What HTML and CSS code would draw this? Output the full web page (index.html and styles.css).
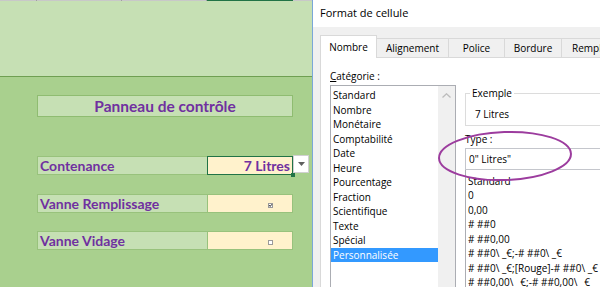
FILE: index.html
```html
<!DOCTYPE html>
<html lang="fr">
<head>
  <meta charset="UTF-8">
  <title>Format de cellule</title>
  <link rel="stylesheet" href="styles.css">
</head>
<body>
  <div class="sheet">
    <div class="colheads">
      <span class="ch ch-a"></span>
      <span class="ch ch-b"></span>
      <span class="ch ch-c"></span>
      <span class="ch ch-d"></span>
      <span class="ch ch-e"></span>
    </div>
    <div class="row1"></div>
    <div class="board">
      <div class="title-cell">Panneau de contrôle</div>
      <div class="fields">
        <div class="field">
          <div class="lbl">Contenance</div>
          <div class="val sel">7 Litres</div>
          <div class="dd">
            <svg width="7" height="4" viewBox="0 0 7 4"><polygon points="0,0 7,0 3.5,4" fill="#5f5f5f"/></svg>
          </div>
        </div>
        <div class="field">
          <div class="lbl">Vanne Remplissage</div>
          <div class="val">
            <svg class="check" width="5" height="5" viewBox="0 0 5 5">
              <rect x="0.5" y="0.5" width="4" height="4" fill="#fff" stroke="#9a9a9a"/>
              <path d="M1.2 2.2 L2.2 3.4 L3.8 1.3" fill="none" stroke="#222" stroke-width="1"/>
            </svg>
          </div>
        </div>
        <div class="field">
          <div class="lbl">Vanne Vidage</div>
          <div class="val">
            <svg class="check" width="5" height="5" viewBox="0 0 5 5">
              <rect x="0.5" y="0.5" width="4" height="4" fill="#fff" stroke="#9a9a9a"/>
            </svg>
          </div>
        </div>
      </div>
    </div>
  </div>

  <div class="dialog">
    <div class="titlebar">Format de cellule</div>
    <div class="dbody">
      <div class="tabs">
        <div class="tab on t-nombre">Nombre</div>
        <div class="tab t-align">Alignement</div>
        <div class="tab t-police">Police</div>
        <div class="tab t-bordure">Bordure</div>
        <div class="tab t-rempl">Remplissage</div>
      </div>
      <div class="panel">
        <div class="cat-col">
          <div class="cat-label"><u>C</u>atégorie :</div>
          <div class="catlist">
            <ul class="items">
              <li>Standard</li>
              <li>Nombre</li>
              <li>Monétaire</li>
              <li>Comptabilité</li>
              <li>Date</li>
              <li>Heure</li>
              <li>Pourcentage</li>
              <li>Fraction</li>
              <li>Scientifique</li>
              <li>Texte</li>
              <li>Spécial</li>
              <li class="picked">Personnalisée</li>
            </ul>
            <div class="vscroll">
              <svg width="9" height="5" viewBox="0 0 9 5"><polyline points="0.5,4.5 4.5,0.8 8.5,4.5" fill="none" stroke="#bcbcbc" stroke-width="1.3"/></svg>
            </div>
          </div>
        </div>
        <div class="right-col">
          <fieldset class="sample">
            <legend>Exemple</legend>
            <div class="sample-text">7 Litres</div>
          </fieldset>
          <div class="type-label">Type :</div>
          <div class="type-input">0" Litres"</div>
          <ul class="items types">
            <li>Standard</li>
            <li>0</li>
            <li>0,00</li>
            <li># ##0</li>
            <li># ##0,00</li>
            <li># ##0\ _€;-# ##0\ _€</li>
            <li># ##0\ _€;[Rouge]-# ##0\ _€</li>
            <li># ##0,00\ _€;-# ##0,00\ _€</li>
          </ul>
        </div>
      </div>
    </div>
    <svg class="circle" width="140" height="56" viewBox="0 0 140 56">
      <ellipse cx="69" cy="27" rx="66" ry="24" fill="none" stroke="#9c3c9e" stroke-width="2" transform="rotate(-2 69 27)"/>
    </svg>
  </div>
</body>
</html>
```

FILE: styles.css
```css
* {
  box-sizing: border-box;
}
html, body {
  margin: 0;
  height: 100%;
}
body {
  display: flex;
  overflow: hidden;
  font-family: "Open Sans", "Noto Sans", sans-serif;
  color: #000;
}

/* feuille excel */
.sheet {
  width: 312px;
  flex: none;
  background: #a9d08e;
  font-family: Lato, "Liberation Sans", sans-serif;
}
.colheads {
  display: flex;
  height: 1px;
  background: #c8c8c8;
}
.ch {
  border-right: 1px solid #a0a0a0;
}
.ch-a { width: 37px; }
.ch-b { width: 85px; }
.ch-c { width: 85px; }
.ch-d { width: 86px; background: #217346; border-right: none; }
.ch-e { flex: 1; border-right: none; }
.row1 {
  height: 76px;
  background: #c6e0b4;
  border-bottom: 1px solid #6f9f52;
}
.board {
  padding: 18px 0 0 37px;
}
.title-cell {
  width: 256px;
  height: 22px;
  border: 1px solid #8fbc71;
  background: #c6e0b4;
  color: #7030a0;
  font-weight: 700;
  font-size: 15.5px;
  line-height: 20px;
  text-align: center;
}
.fields {
  margin-top: 39px;
  display: flex;
  flex-direction: column;
  gap: 18.5px;
}
.field {
  display: flex;
  height: 19px;
}
.lbl {
  width: 170px;
  background: #c6e0b4;
  border: 1px solid #98c27c;
  border-right: none;
  color: #7030a0;
  font-weight: 700;
  font-size: 14px;
  line-height: 17px;
  padding-left: 2px;
}
.val {
  width: 86px;
  background: #fff2cc;
  border: 1px solid #98c27c;
}
.val.sel {
  position: relative;
  border-color: #217346;
  text-align: right;
  padding-right: 2px;
  color: #7030a0;
  font-weight: 700;
  font-size: 14px;
  line-height: 17px;
}
.val.sel::after {
  content: "";
  position: absolute;
  right: -3px;
  bottom: -3px;
  width: 4px;
  height: 4px;
  background: #217346;
}
.dd {
  width: 16px;
  height: 18px;
  margin-top: -1px;
  background: #fff;
  border: 1px solid #d0d0d0;
  display: flex;
  align-items: center;
  justify-content: center;
}
.check {
  display: block;
  margin: 8px 0 0 60px;
}

/* boite de dialogue */
.dialog {
  flex: 1;
  min-width: 0;
  position: relative;
  overflow: hidden;
  border-left: 1px solid #7aa7d8;
  background: #f0f0f0;
  font-size: 10px;
}
.titlebar {
  height: 27px;
  background: #fff;
  padding-left: 7px;
  font-size: 11px;
  line-height: 26px;
}
.dbody {
  padding: 8px 0 0 7px;
}
.tabs {
  display: flex;
  align-items: flex-end;
  height: 22px;
  white-space: nowrap;
}
.tab {
  flex: none;
  height: 19px;
  border: 1px solid #d9d9d9;
  border-left: none;
  border-bottom: none;
  background: #f0f0f0;
  text-align: center;
  line-height: 18px;
}
.tab.on {
  height: 23px;
  margin-bottom: -1px;
  position: relative;
  background: #fff;
  border-left: 1px solid #d9d9d9;
  line-height: 22px;
}
.t-nombre { width: 57px; }
.t-align { width: 72px; }
.t-police { width: 56px; }
.t-bordure { width: 57px; }
.t-rempl { width: 80px; padding-left: 10px; text-align: left; }
.panel {
  display: flex;
  height: 240px;
  width: 320px;
  padding: 11px 0 0 9px;
  background: #fff;
  border-top: 1px solid #d9d9d9;
  border-left: 1px solid #d9d9d9;
}
.cat-col {
  width: 126px;
  flex: none;
}
.cat-label {
  height: 16px;
  line-height: 14.5px;
}
.catlist {
  display: flex;
  height: 220px;
  border: 1px solid #abadb3;
}
.items {
  list-style: none;
  margin: 0;
  padding: 2px 0 0 0;
  flex: 1;
}
.items li {
  padding-left: 2px;
  line-height: 14.5px;
  white-space: nowrap;
}
.items li.picked {
  background: #3399ff;
  color: #fff;
}
.vscroll {
  width: 17px;
  background: #f0f0f0;
  display: flex;
  justify-content: center;
  padding-top: 7px;
}
.vscroll svg {
  display: block;
}
.right-col {
  width: 200px;
  flex: none;
  margin-left: 9px;
}
.sample {
  margin: 17px 0 0 0;
  padding: 6px 0 4px 9px;
  border: 1px solid #dcdcdc;
  min-width: 0;
}
.sample legend {
  padding: 0 2px;
  margin-left: -5px;
  line-height: 14.5px;
}
.sample-text {
  line-height: 14.5px;
}
.type-label {
  margin-top: 6px;
  line-height: 14.5px;
}
.type-input {
  height: 22px;
  margin-top: 1px;
  padding-left: 3px;
  border: 1px solid #c4c6cc;
  line-height: 20px;
}
.types {
  border-left: 1px solid #abadb3;
  padding-top: 4px;
  height: 200px;
}

/* cercle dessine par-dessus */
.circle {
  position: absolute;
  left: 123px;
  top: 129px;
}
```
